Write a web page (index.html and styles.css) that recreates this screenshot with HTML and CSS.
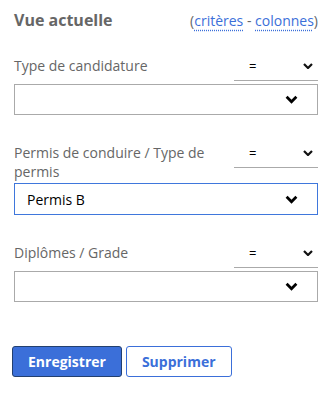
FILE: index.html
```html
<!DOCTYPE html>
<html lang="fr">
<head>
  <meta charset="UTF-8" />
  <meta name="viewport" content="width=device-width, initial-scale=1.0"/>
  <title>Vue actuelle</title>
  <link rel="stylesheet" href="styles.css">
</head>
<body>
  <div class="panel">
    <div class="panel-head">
      <h2>Vue actuelle</h2>
      <span class="links">(<a href="#">critères</a> - <a href="#">colonnes</a>)</span>
    </div>

    <div class="field">
      <div class="field-top">
        <label>Type de candidature</label>
        <div class="op">
          <span>=</span>
          <svg class="chev-sm" viewBox="0 0 10 6"><path d="M1 1l4 4 4-4" /></svg>
        </div>
      </div>
      <div class="select">
        <span></span>
        <svg class="chev" viewBox="0 0 12 8"><path d="M1.5 1.5l4.5 4.5 4.5-4.5" /></svg>
      </div>
    </div>

    <div class="field">
      <div class="field-top">
        <label>Permis de conduire / Type de permis</label>
        <div class="op">
          <span>=</span>
          <svg class="chev-sm" viewBox="0 0 10 6"><path d="M1 1l4 4 4-4" /></svg>
        </div>
      </div>
      <div class="select focused">
        <span>Permis B</span>
        <svg class="chev" viewBox="0 0 12 8"><path d="M1.5 1.5l4.5 4.5 4.5-4.5" /></svg>
      </div>
    </div>

    <div class="field">
      <div class="field-top">
        <label>Diplômes / Grade</label>
        <div class="op">
          <span>=</span>
          <svg class="chev-sm" viewBox="0 0 10 6"><path d="M1 1l4 4 4-4" /></svg>
        </div>
      </div>
      <div class="select">
        <span></span>
        <svg class="chev" viewBox="0 0 12 8"><path d="M1.5 1.5l4.5 4.5 4.5-4.5" /></svg>
      </div>
    </div>

    <div class="actions">
      <button class="btn primary">Enregistrer</button>
      <button class="btn secondary">Supprimer</button>
    </div>
  </div>
</body>
</html>
```

FILE: styles.css
```css
:root {
  --primary-color: #3b6fd9;
  --text-grey: #666;
  --line: #aaa;
}

body {
  font-family: 'Open Sans', sans-serif;
  background-color: white;
  margin: 0;
  padding: 0;
}

.panel {
  padding: 9px 13px 0 14px;
}

.panel-head {
  display: flex;
  justify-content: space-between;
  align-items: baseline;
}

.panel-head h2 {
  margin: 0;
  font-size: 16px;
  font-weight: 700;
  color: var(--text-grey);
}

.links {
  font-size: 14px;
  color: var(--text-grey);
}

.links a {
  color: var(--primary-color);
  text-decoration: underline dotted;
  text-underline-offset: 4px;
}

.field {
  margin-top: 23px;
}

.field + .field {
  margin-top: 26px;
}

.field-top {
  display: flex;
  justify-content: space-between;
  align-items: flex-start;
  gap: 12px;
}

.field-top label {
  font-size: 14px;
  line-height: 19px;
  color: var(--text-grey);
  padding-top: 2px;
}

.op {
  flex: 0 0 84px;
  height: 27px;
  border-bottom: 1px solid var(--line);
  display: flex;
  justify-content: space-between;
  align-items: center;
  padding: 0 5px 3px 15px;
  box-sizing: border-box;
  font-size: 13px;
  color: #000;
}

.chev-sm {
  width: 10px;
  height: 6px;
  fill: none;
  stroke: #111;
  stroke-width: 2.2;
}

.select {
  margin-top: 3px;
  height: 31px;
  border: 1px solid var(--line);
  display: flex;
  justify-content: space-between;
  align-items: center;
  padding: 0 19px 0 12px;
  box-sizing: border-box;
  font-size: 14px;
  color: #000;
}

.select.focused {
  margin-top: 2px;
  height: 32px;
  border-color: #3f77dc;
}

.chev {
  width: 13px;
  height: 9px;
  fill: none;
  stroke: #000;
  stroke-width: 2.6;
}

.actions {
  display: flex;
  gap: 4px;
  margin: 44px 0 0 -2px;
}

.btn {
  font-family: 'Open Sans', sans-serif;
  font-size: 14px;
  font-weight: 700;
  height: 31px;
  border-radius: 3px;
  padding: 0 15px;
  cursor: pointer;
}

.btn.primary {
  background-color: var(--primary-color);
  color: white;
  border: 1px solid #23406f;
}

.btn.secondary {
  background-color: white;
  color: var(--primary-color);
  border: 1px solid var(--primary-color);
}
```
